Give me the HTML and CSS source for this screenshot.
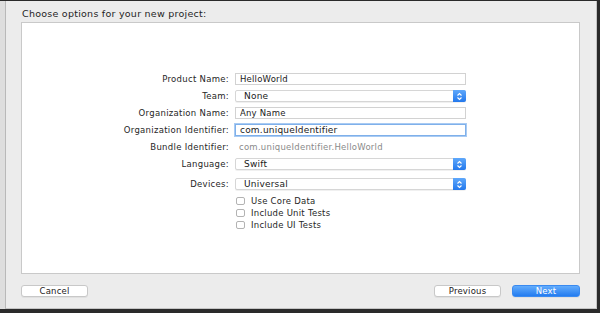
FILE: index.html
```html
<!DOCTYPE html>
<html lang="en">
<head>
  <meta charset="UTF-8">
  <title>New Project Options</title>
  <link rel="stylesheet" href="styles.css">
</head>
<body>
  <div class="screen">
    <div class="side-strip"></div>
    <div class="window">
      <h1 class="title">Choose options for your new project:</h1>

      <div class="panel">
        <form class="options">
          <label class="label" for="product">Product Name:</label>
          <input class="field" id="product" type="text" value="HelloWorld">

          <label class="label">Team:</label>
          <div class="popup"><span>None</span><span class="stepper"></span></div>

          <label class="label" for="org">Organization Name:</label>
          <input class="field" id="org" type="text" value="Any Name">

          <label class="label" for="orgid">Organization Identifier:</label>
          <input class="field focused" id="orgid" type="text" value="com.uniqueIdentifier">

          <span class="label">Bundle Identifier:</span>
          <span class="bundle">com.uniqueIdentifier.HelloWorld</span>

          <label class="label">Language:</label>
          <div class="popup"><span>Swift</span><span class="stepper"></span></div>

          <label class="label devices">Devices:</label>
          <div class="popup devices"><span>Universal</span><span class="stepper"></span></div>

          <span></span>
          <div class="checks">
            <label class="check"><span class="box"></span>Use Core Data</label>
            <label class="check"><span class="box"></span>Include Unit Tests</label>
            <label class="check"><span class="box"></span>Include UI Tests</label>
          </div>
        </form>
      </div>

      <div class="actions">
        <button type="button" class="btn">Cancel</button>
        <div class="actions-right">
          <button type="button" class="btn">Previous</button>
          <button type="button" class="btn primary">Next</button>
        </div>
      </div>
    </div>
  </div>

  <script>
    document.querySelectorAll('.stepper').forEach(function (el) {
      el.innerHTML = '<svg width="7" height="9" viewBox="0 0 7 9"><path d="M1.5 3.5 L3.5 1.5 L5.5 3.5 M1.5 5.5 L3.5 7.5 L5.5 5.5" fill="none" stroke="#fff" stroke-width="1.1"/></svg>';
    });
  </script>
</body>
</html>
```

FILE: styles.css
```css
* {
  box-sizing: border-box;
}

body {
  margin: 0;
  padding: 0;
  font-family: 'DejaVu Sans', 'Liberation Sans', sans-serif;
  color: #222;
}

.screen {
  display: flex;
  width: 600px;
  height: 313px;
  background: #2a2a2a;
  padding: 1px 3px 4px 0;
}

.side-strip {
  width: 6px;
  background: #dedede;
  border-right: 1px solid #b9b9b9;
}

.window {
  flex: 1;
  display: flex;
  flex-direction: column;
  background: #ececec;
  border-right: 1px solid #c4c4c4;
  border-bottom: 1px solid #c4c4c4;
  padding: 0 16px 0 15px;
}

.title {
  margin: 0;
  height: 21px;
  padding-top: 8px;
  padding-left: 1px;
  font-size: 9.5px;
  font-weight: normal;
  letter-spacing: 0.25px;
  line-height: 10px;
  color: #1e1e1e;
}

.panel {
  height: 252px;
  background: #fff;
  border: 1px solid #c9c9c9;
  padding-top: 50px;
}

.options {
  display: grid;
  grid-template-columns: 207px 231px;
  column-gap: 6px;
  row-gap: 5px;
  align-items: center;
}

.label {
  text-align: right;
  font-size: 8.5px;
  letter-spacing: 0.3px;
  line-height: 12px;
  color: #262626;
}

.field,
.popup {
  height: 12px;
  border: 1px solid #d2d2d2;
  background: #fff;
  font-family: inherit;
  font-size: 8.5px;
  letter-spacing: 0.2px;
  color: #1a1a1a;
  padding: 0 4px;
  margin: 0;
  outline: none;
}

.field.focused {
  border: 1px solid #7fb0ea;
  box-shadow: 0 0 0 1px #a9cbf3;
  font-size: 9px;
}

.popup {
  display: flex;
  align-items: center;
  justify-content: space-between;
  padding: 0 0 0 8px;
  border-radius: 2px;
  border-color: #d6d6d6;
  box-shadow: 0 1px 0 rgba(0, 0, 0, 0.06);
  font-size: 9px;
}

.stepper {
  width: 13px;
  height: 12px;
  margin: -1px -1px -1px 0;
  border-radius: 0 2px 2px 0;
  background: linear-gradient(#5fa8fb, #2378ec);
  display: flex;
  align-items: center;
  justify-content: center;
}

.bundle {
  font-size: 8.5px;
  letter-spacing: 0.25px;
  line-height: 12px;
  color: #8a8a8a;
  padding-left: 4px;
}

.devices {
  margin-top: 3px;
}

.checks {
  display: flex;
  flex-direction: column;
  gap: 4px;
  padding-top: 2px;
  padding-left: 1px;
}

.check {
  display: flex;
  align-items: center;
  gap: 6px;
  height: 8px;
  font-size: 8.5px;
  letter-spacing: 0.25px;
  color: #262626;
}

.box {
  width: 9px;
  height: 8px;
  border: 1px solid #b3b3b3;
  border-radius: 2px;
  background: #fff;
}

.actions {
  display: flex;
  justify-content: space-between;
  padding-top: 11px;
}

.actions-right {
  display: flex;
  gap: 11px;
}

.btn {
  width: 67px;
  height: 12px;
  padding: 0;
  border: 1px solid #c8c8c8;
  border-radius: 3px;
  background: #fff;
  font-family: inherit;
  font-size: 8.5px;
  letter-spacing: 0.2px;
  line-height: 10px;
  color: #222;
  box-shadow: 0 1px 0 rgba(0, 0, 0, 0.05);
}

.btn.primary {
  width: 68px;
  border-color: #3a8af0;
  background: linear-gradient(#63acfc, #237cf0);
  color: #fff;
}
```
